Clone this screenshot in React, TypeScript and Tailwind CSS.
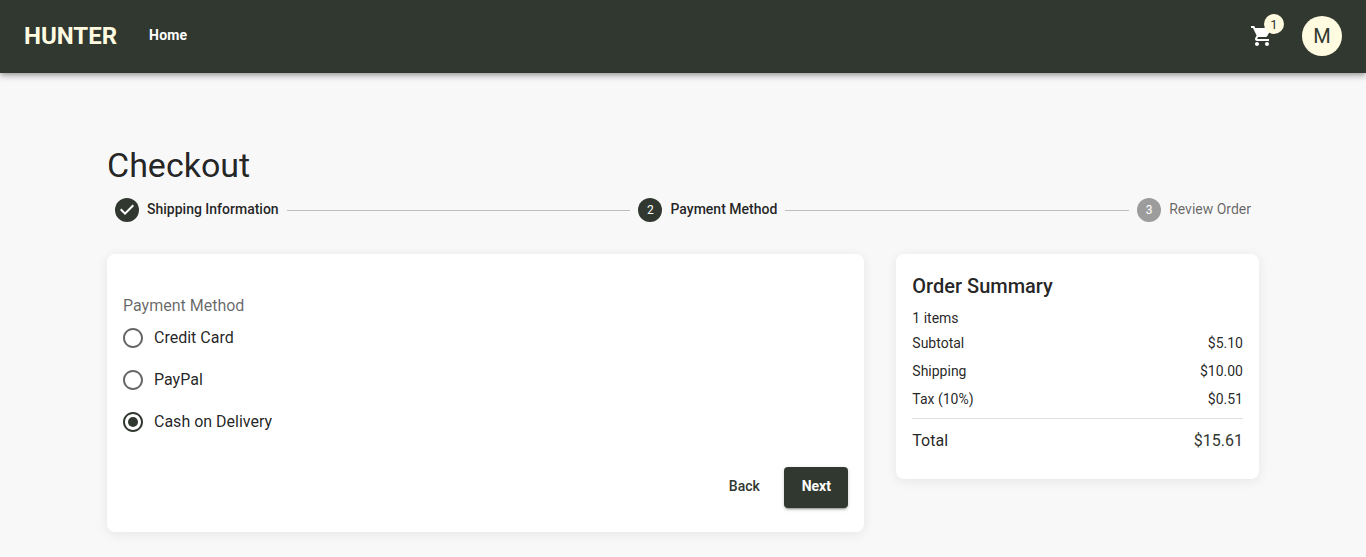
import { Fragment } from 'react';
import { MdRadioButtonUnchecked, MdShoppingCart } from 'react-icons/md';

const steps = ['Shipping Information', 'Payment Method', 'Review Order'];
const activeStep = 1;
const methods = ['Credit Card', 'PayPal', 'Cash on Delivery'];
const selected = 'Cash on Delivery';
const rows = [
  ['Subtotal', '$5.10'],
  ['Shipping', '$10.00'],
  ['Tax (10%)', '$0.51'],
];

function Header() {
  return (
    <header className="relative flex h-[73px] items-start bg-[#313830] px-6 shadow-[0_2px_4px_-1px_rgba(0,0,0,0.2),0_4px_5px_0_rgba(0,0,0,0.14),0_1px_10px_0_rgba(0,0,0,0.12)]">
      <div className="flex h-[72px] flex-1 items-center">
        <span className="text-2xl leading-8 font-bold text-[#fffbe0]">HUNTER</span>
        <a className="ml-8 pb-0.5 text-sm font-bold tracking-[0.01em] text-white">Home</a>
        <div className="relative mr-7 ml-auto">
          <MdShoppingCart className="size-6 text-white" />
          <span className="absolute -top-2.5 -right-2.5 flex size-5 items-center justify-center rounded-full bg-[#fffbe0] text-[13px] leading-none text-[#313830]">1</span>
        </div>
        <div className="flex size-10 items-center justify-center rounded-full bg-[#fffbe0] text-xl leading-none text-[#313830]">M</div>
      </div>
    </header>
  );
}

function Stepper() {
  return (
    <div className="flex items-center">
      {steps.map((label, i) => (
        <Fragment key={label}>
          {i > 0 && <div className="h-px flex-1 bg-[#bdbdbd]" />}
          <div className="flex items-center gap-2 px-2">
            <span className={`flex size-6 items-center justify-center rounded-full text-xs text-white ${i <= activeStep ? 'bg-[#313830]' : 'bg-[#9c9c9c]'}`}>
              {i < activeStep ? (
                <svg viewBox="0 0 24 24" className="size-6 fill-white">
                  <path d="M10 17l-5-5 1.4-1.4 3.6 3.6 7.6-7.6L19 8l-9 9z" />
                </svg>
              ) : (
                i + 1
              )}
            </span>
            <span className={`pb-0.5 text-sm leading-5 ${i <= activeStep ? 'font-medium text-black/87' : 'text-black/60'}`}>{label}</span>
          </div>
        </Fragment>
      ))}
    </div>
  );
}

function PaymentCard() {
  return (
    <section className="rounded-lg bg-white px-4 pt-10 pb-6 shadow-[0_2px_12px_rgba(0,0,0,0.08)]">
      <div className="leading-[23px] text-black/60">Payment Method</div>
      {methods.map((m) => (
        <div key={m} className="flex h-[42px] items-center gap-[9px]">
          <span className="-ml-0.5 flex size-6">
            {m === selected ? (
              <svg viewBox="0 0 24 24" className="size-6 fill-[#313830]">
                <path d="M12 2C6.48 2 2 6.48 2 12s4.48 10 10 10 10-4.48 10-10S17.52 2 12 2zm0 18c-4.42 0-8-3.58-8-8s3.58-8 8-8 8 3.58 8 8-3.58 8-8 8z" />
                <circle cx="12" cy="12" r="5" />
              </svg>
            ) : (
              <MdRadioButtonUnchecked className="size-6 text-black/60" />
            )}
          </span>
          <span className="leading-6 text-black/87">{m}</span>
        </div>
      ))}
      <div className="mt-6 flex justify-end gap-2 text-sm font-medium">
        <button className="w-16 rounded pt-[7px] pb-[9px] leading-[24.5px] text-[#313830]">Back</button>
        <button className="w-16 rounded bg-[#313830] pt-[7px] pb-[9px] leading-[24.5px] font-bold text-white shadow-[0_3px_1px_-2px_rgba(0,0,0,0.2),0_2px_2px_0_rgba(0,0,0,0.14),0_1px_5px_0_rgba(0,0,0,0.12)]">Next</button>
      </div>
    </section>
  );
}

function Summary() {
  return (
    <section className="h-[225px] rounded-lg bg-white p-4 text-black/87 shadow-[0_2px_12px_rgba(0,0,0,0.08)]">
      <h2 className="text-xl leading-8 font-medium">Order Summary</h2>
      <div className="mt-1.5 mb-px text-sm leading-5">1 items</div>
      {rows.map(([label, value]) => (
        <div key={label} className="flex justify-between py-1 text-sm leading-5">
          <span>{label}</span>
          <span>{value}</span>
        </div>
      ))}
      <div className="mt-[5px] h-px bg-black/12" />
      <div className="mt-2.5 flex justify-between leading-6">
        <span>Total</span>
        <span className="text-[#313830]">{'$15.61'}</span>
      </div>
    </section>
  );
}

export default function App() {
  return (
    <div className="min-h-[557px] bg-[#f8f8f8] font-['Roboto',sans-serif]">
      <Header />
      <main className="mx-auto w-[1152px] pt-[71px]">
        <h1 className="text-[34px] leading-[42px] text-black/87">Checkout</h1>
        <div className="mt-3 mb-8">
          <Stepper />
        </div>
        <div className="grid grid-cols-[757.33px_362.67px] items-start gap-8">
          <PaymentCard />
          <Summary />
        </div>
      </main>
    </div>
  );
}
